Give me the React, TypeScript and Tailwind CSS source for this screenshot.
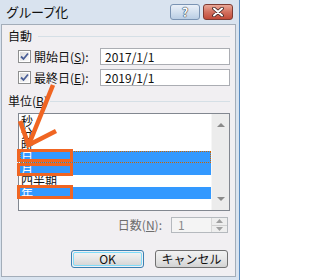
import React from "react";

function CheckBox() {
  return (
    <div className="w-[13px] h-[13px] border border-[#8e8f8f] bg-white p-[1px] shrink-0">
      <div className="w-full h-full bg-gradient-to-br from-[#dcdcdc] to-[#fbfbfb] flex items-center justify-center">
        <svg width="9" height="9" viewBox="0 0 9 9">
          <path d="M1 4.5 L3.5 7 L8 1.5" fill="none" stroke="#4a5f97" strokeWidth="1.8" />
        </svg>
      </div>
    </div>
  );
}

function Row({ label, k, value }: { label: string; k: string; value: string }) {
  return (
    <div className="flex items-center h-[17px] ml-[10px]">
      <CheckBox />
      <span className="ml-[3px] text-[12px] leading-[12px] text-[#111]">
        {label}(<span className="underline">{k}</span>):
      </span>
      <div className="ml-auto w-[130px] h-[17px] border border-[#abadb3] bg-white flex items-center pl-[4px] text-[12px] leading-[12px] text-[#111]">
        {value}
      </div>
    </div>
  );
}

const items = ["秒", "分", "時", "日", "月", "四半期", "年"];
const selected = [3, 4, 6];

export default function App() {
  return (
    <div className="relative w-[240px] h-[280px] bg-[#d9e3ef] flex flex-col overflow-hidden font-['Noto_Sans_CJK_JP','Noto_Sans',sans-serif] border-r border-[#5b8cc0]">
      {/* title bar */}
      <div className="h-[24px] flex items-center pl-[6px] pr-[6px] shrink-0">
        <span className="text-[13px] leading-[14px] text-[#111] tracking-[-0.5px]">グループ化</span>
        <div className="ml-auto flex gap-[3px]">
          <div className="w-[30px] h-[16px] rounded-[3px] border border-[#7a93b3] bg-gradient-to-b from-[#eaf0f8] via-[#d3e0ef] to-[#b9cde4] flex items-center justify-center">
            <span className="text-[12px] leading-[12px] font-bold text-white [text-shadow:0_0_1px_#2a3a50,0_0_1px_#2a3a50,0_0_1px_#2a3a50]">?</span>
          </div>
          <div className="w-[30px] h-[16px] rounded-[3px] border border-[#7d3b33] bg-gradient-to-b from-[#eaa898] via-[#d2705f] to-[#c24a38] flex items-center justify-center">
            <svg width="14" height="10" viewBox="0 0 14 10">
              <path d="M3 1.5 L11 8.5 M11 1.5 L3 8.5" stroke="#3a2020" strokeWidth="3.6" strokeLinecap="round" />
              <path d="M3 1.5 L11 8.5 M11 1.5 L3 8.5" stroke="#ffffff" strokeWidth="2" strokeLinecap="round" />
            </svg>
          </div>
        </div>
      </div>

      {/* body */}
      <div className="ml-[1px] mr-[3px] mb-[3px] flex-1 bg-[#f1eff2] border border-[#a3adb9] pl-[6px] pr-[5px] flex flex-col">
        <div className="mt-[5px] h-[12px] flex items-center">
          <span className="text-[12px] leading-[12px] text-[#111]">自動</span>
          <div className="ml-[6px] flex-1 h-px bg-[#d5dfe6]" />
        </div>
        <div className="mt-[6px]">
          <Row label="開始日" k="S" value="2017/1/1" />
        </div>
        <div className="mt-[4px]">
          <Row label="最終日" k="E" value="2019/1/1" />
        </div>
        <div className="mt-[9px] h-[12px] flex items-center">
          <span className="text-[12px] leading-[12px] text-[#111]">
            単位(<span className="underline">B</span>)
          </span>
          <div className="ml-[2px] flex-1 h-px bg-[#d5dfe6]" />
        </div>

        {/* list box */}
        <div className="mt-[6px] ml-[10px] h-[98px] border border-[#828790] bg-white flex">
          <div className="flex-1 pl-[1px] pt-[1px] flex flex-col">
            {items.map((t, i) => {
              const sel = selected.includes(i);
              return (
                <div
                  key={t}
                  className={
                    "h-[12px] text-[12px] leading-[12px] pl-[1px] " +
                    (sel ? "bg-[#3399ff] text-white " : "text-[#111] ") +
                    (i === 3 ? "outline outline-1 outline-dotted outline-[#cc6600] -outline-offset-1" : "")
                  }
                >
                  {t}
                </div>
              );
            })}
          </div>
          <div className="w-[18px] bg-[#ececec] border-l border-[#f6f6f6] flex flex-col items-center justify-between py-[8px]">
            <svg width="8" height="5" viewBox="0 0 8 5">
              <path d="M0 5 L4 1 L8 5 Z" fill="#8a8a8a" />
            </svg>
            <svg width="8" height="5" viewBox="0 0 8 5">
              <path d="M0 0 L4 4 L8 0 Z" fill="#8a8a8a" />
            </svg>
          </div>
        </div>

        {/* 日数 */}
        <div className="mt-[6px] h-[16px] flex items-center justify-end mr-[2px]">
          <span className="text-[12px] leading-[12px] text-[#6d6d6d]">
            日数(<span className="underline">N</span>):
          </span>
          <div className="ml-[9px] w-[57px] h-[16px] border border-[#b5b9be] bg-[#f4f4f4] flex">
            <div className="flex-1 flex items-center pl-[6px] text-[12px] leading-[12px] text-[#8a8a8a]">1</div>
            <div className="w-[16px] flex flex-col border-l border-[#d8d8d8]">
              <div className="flex-1 flex items-center justify-center bg-[#eeeeee] border-b border-[#d0d0d0]">
                <svg width="7" height="4" viewBox="0 0 7 4">
                  <path d="M0 4 L3.5 0 L7 4 Z" fill="#a0a0a0" />
                </svg>
              </div>
              <div className="flex-1 flex items-center justify-center bg-[#eeeeee]">
                <svg width="7" height="4" viewBox="0 0 7 4">
                  <path d="M0 0 L3.5 4 L7 0 Z" fill="#a0a0a0" />
                </svg>
              </div>
            </div>
          </div>
        </div>

        {/* buttons */}
        <div className="mt-[17px] flex justify-end gap-[11px] mr-[2px]">
          <div className="w-[73px] h-[18px] rounded-[3px] border border-[#3c7fb1] p-[1px]">
            <div className="w-full h-full rounded-[2px] border border-[#7fdcf9] bg-gradient-to-b from-[#f2f2f2] via-[#e6e6e6] to-[#d6d6d6] flex items-center justify-center text-[12px] leading-[12px] text-[#111]">
              OK
            </div>
          </div>
          <div className="w-[73px] h-[18px] rounded-[3px] border border-[#707070] bg-gradient-to-b from-[#f2f2f2] via-[#e6e6e6] to-[#d2d2d2] flex items-center justify-center text-[12px] leading-[12px] text-[#111]">
            キャンセル
          </div>
        </div>
      </div>

      {/* annotations */}
      <div className="absolute left-[17px] top-[149px] w-[56px] h-[13px] border-[3px] border-[#f06522]" />
      <div className="absolute left-[17px] top-[163px] w-[56px] h-[13px] border-[3px] border-[#f06522]" />
      <div className="absolute left-[17px] top-[185px] w-[56px] h-[14px] border-[3px] border-[#f06522]" />
      <svg className="absolute left-0 top-0 pointer-events-none" width="240" height="280" viewBox="0 0 240 280">
        <path d="M53 85 L29.5 143" stroke="#f06522" strokeWidth="4.5" fill="none" />
        <path d="M20 121 L28.5 145 L56 131" stroke="#f06522" strokeWidth="4.5" fill="none" strokeLinejoin="miter" />
      </svg>
    </div>
  );
}
